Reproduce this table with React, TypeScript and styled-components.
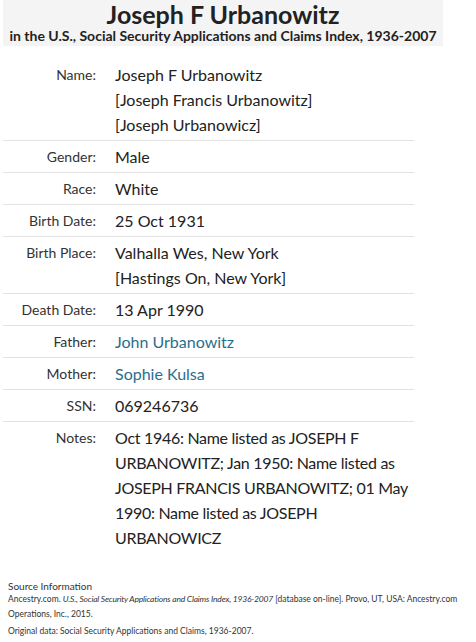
import React from "react";
import styled, { createGlobalStyle } from "styled-components";

const GlobalStyle = createGlobalStyle`
  body {
    margin: 0;
    background: #fff;
    font-family: Lato, "Liberation Sans", sans-serif;
    color: #222;
  }
`;

const Page = styled.div`
  width: 476px;
  height: 642px;
  overflow: hidden;
  display: flex;
  flex-direction: column;
`;

const Header = styled.header`
  margin-left: 3px;
  width: 440px;
  height: 46px;
  background: #f4f4f4;
  display: flex;
  flex-direction: column;
  align-items: center;
`;

const Title = styled.h1`
  margin: 0;
  font-size: 25px;
  line-height: 29px;
  font-weight: 700;
  color: #222;
`;

const Subtitle = styled.div`
  font-size: 14px;
  line-height: 14px;
  font-weight: 700;
  color: #222;
  white-space: nowrap;
`;

const Facts = styled.div`
  margin: 13px 0 0 3px;
  width: 411px;
  display: flex;
  flex-direction: column;
`;

const Row = styled.div<{ $last?: boolean }>`
  display: grid;
  grid-template-columns: 93px 1fr;
  column-gap: 19px;
  padding: 3px 0;
  border-bottom: ${({ $last }) => ($last ? "none" : "1px solid #e2e2e2")};
`;

const Label = styled.div`
  text-align: right;
  font-size: 14px;
  line-height: 25px;
  color: #333;
`;

const Value = styled.div<{ $tight?: boolean }>`
  font-size: 16px;
  line-height: 25px;
  color: #222;
  letter-spacing: ${({ $tight }) => ($tight ? "-0.3px" : "normal")};
`;

const Link = styled.a`
  color: #2a6e8e;
  text-decoration: none;
`;

const Source = styled.footer`
  margin: 27px 0 0 8px;
  font-size: 8.5px;
  line-height: 15px;
  color: #333;
`;

const SourceTitle = styled.div`
  font-size: 10px;
  line-height: 12px;
`;

const SourcePara = styled.p`
  margin: 0 0 2px;
`;

const Cite = styled.i`
  letter-spacing: -0.2px;
`;

const facts: { label: string; lines: React.ReactNode[] }[] = [
  {
    label: "Name:",
    lines: [
      "Joseph F Urbanowitz",
      "[Joseph Francis Urbanowitz]",
      "[Joseph Urbanowicz]",
    ],
  },
  { label: "Gender:", lines: ["Male"] },
  { label: "Race:", lines: ["White"] },
  { label: "Birth Date:", lines: ["25 Oct 1931"] },
  {
    label: "Birth Place:",
    lines: ["Valhalla Wes, New York", "[Hastings On, New York]"],
  },
  { label: "Death Date:", lines: ["13 Apr 1990"] },
  { label: "Father:", lines: [<Link href="#">John Urbanowitz</Link>] },
  { label: "Mother:", lines: [<Link href="#">Sophie Kulsa</Link>] },
  { label: "SSN:", lines: ["069246736"] },
  {
    label: "Notes:",
    lines: [
      "Oct 1946: Name listed as JOSEPH F URBANOWITZ; Jan 1950: Name listed as JOSEPH FRANCIS URBANOWITZ; 01 May 1990: Name listed as JOSEPH URBANOWICZ",
    ],
  },
];

export default function App() {
  return (
    <Page>
      <GlobalStyle />
      <Header>
        <Title>Joseph F Urbanowitz</Title>
        <Subtitle>
          in the U.S., Social Security Applications and Claims Index, 1936-2007
        </Subtitle>
      </Header>
      <Facts>
        {facts.map((f, i) => (
          <Row key={f.label} $last={i === facts.length - 1}>
            <Label>{f.label}</Label>
            <Value $tight={f.label === "Notes:"}>
              {f.lines.map((l, j) => (
                <div key={j}>{l}</div>
              ))}
            </Value>
          </Row>
        ))}
      </Facts>
      <Source>
        <SourceTitle>Source Information</SourceTitle>
        <SourcePara>
          Ancestry.com.{" "}
          <Cite>U.S., Social Security Applications and Claims Index, 1936-2007</Cite>{" "}
          [database on-line]. Provo, UT, USA: Ancestry.com Operations, Inc.,
          2015.
        </SourcePara>
        <SourcePara>
          Original data: Social Security Applications and Claims, 1936-2007.
        </SourcePara>
      </Source>
    </Page>
  );
}
